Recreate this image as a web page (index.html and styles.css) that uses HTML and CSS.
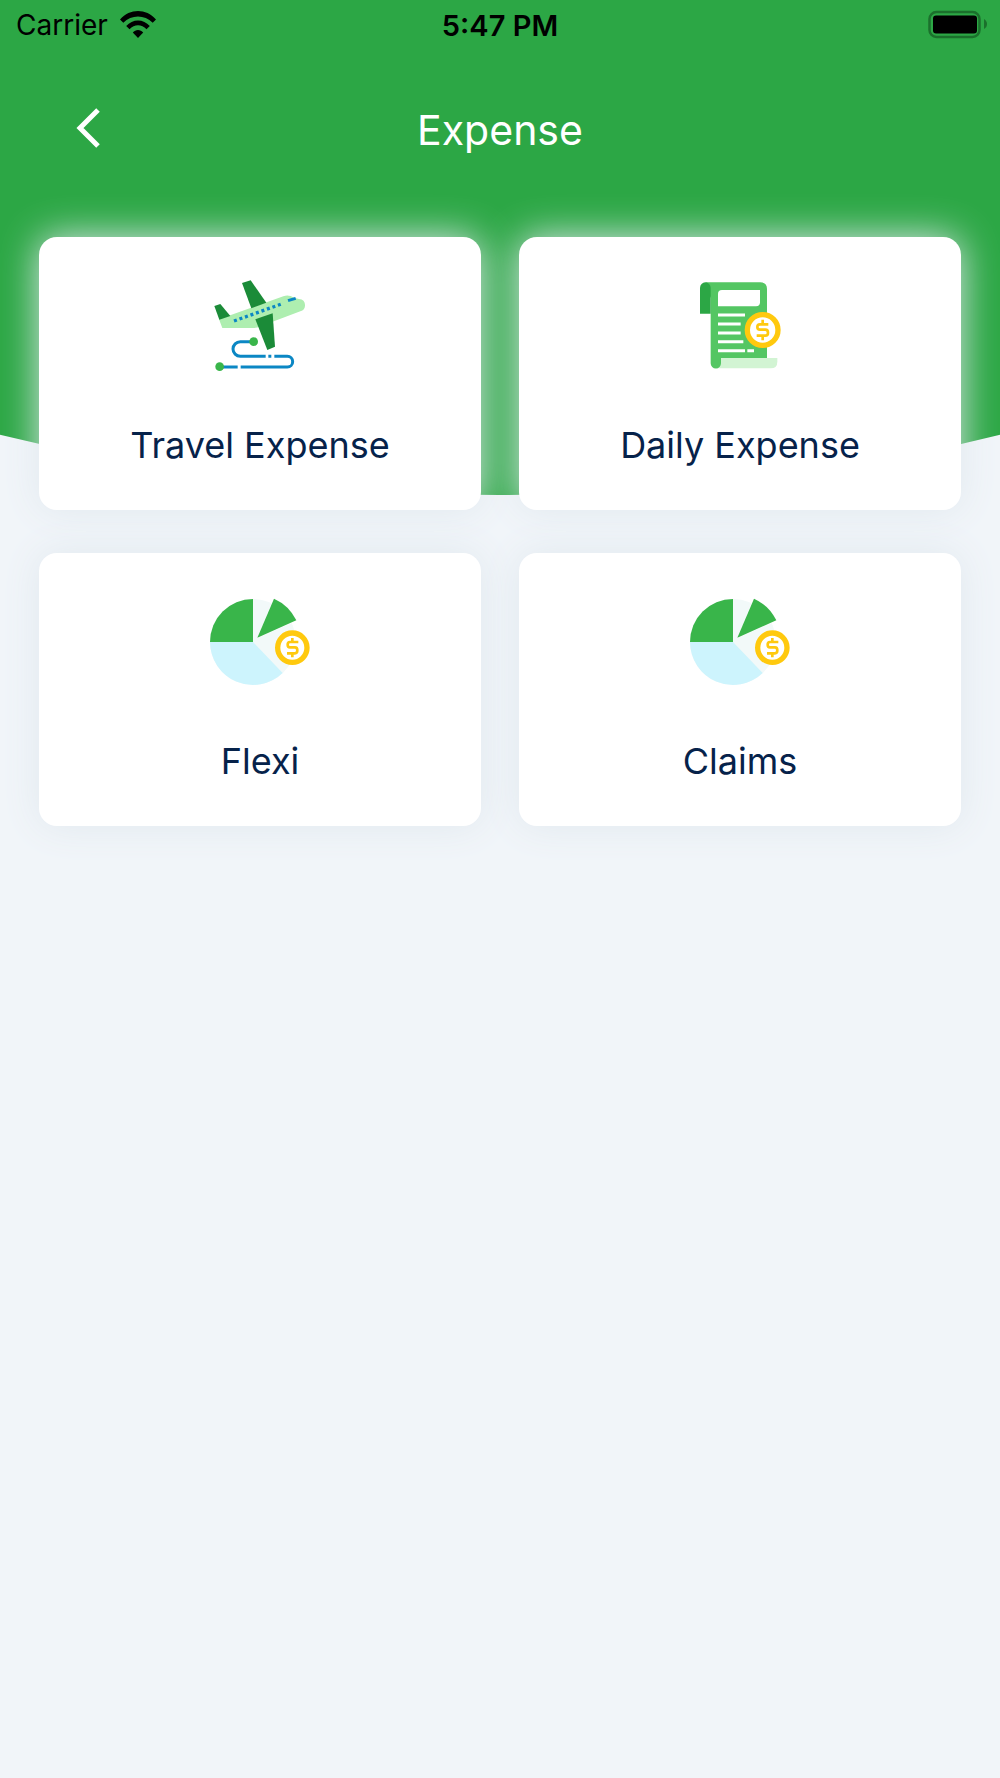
FILE: index.html
```html
<!DOCTYPE html>
<html lang="en">

<head>
    <meta charset="UTF-8">
    <meta name="viewport" content="width=device-width, initial-scale=1.0">
    <title>Expense</title>
    <link rel="stylesheet" href="styles.css">
</head>

<body>
    <div class="hero"></div>

    <div class="status-bar">
        <div class="carrier">
            <span>Carrier</span>
            <svg class="wifi" viewBox="0 0 36 28" aria-hidden="true">
                <path d="M0 8.500C10-2.800 26-2.800 36 8.500L32.700 11.800C24.500 3.400 11.500 3.400 3.300 11.800Z" />
                <path d="M6.200 15C12.500 7.500 23.500 7.500 29.800 15L26.500 18.300C21.600 13 14.400 13 9.500 18.300Z" />
                <path d="M12.800 21.600C15.500 18.200 20.500 18.200 23.200 21.600L18 27Z" />
            </svg>
        </div>
        <span class="time">5:47 PM</span>
        <svg class="battery" viewBox="0 0 60 30" aria-hidden="true">
            <rect x="1.500" y="2" width="50" height="25" rx="7" fill="none" stroke="#1b702c" stroke-width="2.500" />
            <rect x="5" y="5.500" width="44" height="18" rx="3" />
            <path d="M56 9C60 11 60 17 56 19Z" fill="#1b702c" />
        </svg>
    </div>

    <header class="header">
        <button class="back" aria-label="Back">
            <svg viewBox="0 0 24 40" aria-hidden="true">
                <path d="M22 0L4 18L22 36" fill="none" stroke="#fff" stroke-width="5" />
            </svg>
        </button>
        <h1>Expense</h1>
    </header>

    <main class="cards">
        <button class="card">
            <svg class="icon" viewBox="0 0 360 360" aria-hidden="true">
                <path d="M57 163L250 94Q266 88 282 98L297 102Q316 104 315 122Q315 134 301 139L184 183Q170 189 160 189H67Z" fill="#aeeeb0" />
                <path d="M43 123L61 117L91 153L58 164Z" fill="#1b8b38" />
                <path d="M126 54L152 46L199 113L154 130Z" fill="#1b8b38" />
                <path d="M166 163L218 145L225 245L202 255Z" fill="#1b8b38" />
                <path d="M102 168L247 116" fill="none" stroke="#0b87c4" stroke-width="10" stroke-dasharray="9 8.500" />
                <path d="M264 107L287 100" fill="none" stroke="#0b87c4" stroke-width="9" />
                <path d="M161 230H121A22 22 0 0 0 121 274H197M205 274H214M223 274H262A16 16 0 0 1 262 306H122M113 306H60" fill="none" stroke="#0b87c4" stroke-width="9" />
                <circle cx="161" cy="230" r="13" fill="#39b54a" />
                <circle cx="59" cy="305" r="13" fill="#39b54a" />
            </svg>
            <span>Travel Expense</span>
        </button>

        <button class="card">
            <svg class="icon" viewBox="-30 0 360 360" aria-hidden="true">
                <path d="M92 279H262V290Q262 310 242 310H78Z" fill="#d2f4d3" />
                <path d="M47 52H211Q231 52 231 72V279H93V295A15 15 0 0 1 62 295V100Z" fill="#54c663" />
                <path d="M30 146V69A16 17 0 0 1 62 69V146Z" fill="#2ca745" />
                <path d="M96 75H210V112Q210 124 198 124H84V87Q84 75 96 75Z" fill="#fff" />
                <path d="M84 150H165M84 177H152M84 204H152M84 230H160M84 257H165M172 257H192" fill="none" stroke="#fff" stroke-width="9" />
                <circle cx="218" cy="195" r="46" fill="#fff" stroke="#ffc90e" stroke-width="16" />
                <path d="M235 178H210Q202 178 202 186T210 194H226Q234 194 234 203T226 212H200M218 164V178M218 212V226" fill="none" stroke="#ffc90e" stroke-width="8" />
            </svg>
            <span>Daily Expense</span>
        </button>

        <button class="card">
            <svg class="icon" viewBox="0 -12 360 360" aria-hidden="true">
                <circle cx="159" cy="171" r="129" fill="#f2f9f9" />
                <path d="M159 171V42A129 129 0 0 0 30 171Z" fill="#39b54a" />
                <path d="M159 171H30A129 129 0 0 0 248 264Z" fill="#cdf4fd" />
                <path d="M171 160L223 35L304 101Z" fill="#fff" />
                <path d="M172 158L222 41Q267 61 289 106Z" fill="#39b54a" />
                <circle cx="277" cy="188" r="44" fill="#fff" stroke="#ffc90e" stroke-width="16" />
                <path d="M295 171H270Q263 171 263 179T270 187H285Q292 187 292 196T285 205H261M277 159V171M277 205V217" fill="none" stroke="#ffc90e" stroke-width="8" />
            </svg>
            <span>Flexi</span>
        </button>

        <button class="card">
            <svg class="icon" viewBox="0 -12 360 360" aria-hidden="true">
                <circle cx="159" cy="171" r="129" fill="#f2f9f9" />
                <path d="M159 171V42A129 129 0 0 0 30 171Z" fill="#39b54a" />
                <path d="M159 171H30A129 129 0 0 0 248 264Z" fill="#cdf4fd" />
                <path d="M171 160L223 35L304 101Z" fill="#fff" />
                <path d="M172 158L222 41Q267 61 289 106Z" fill="#39b54a" />
                <circle cx="277" cy="188" r="44" fill="#fff" stroke="#ffc90e" stroke-width="16" />
                <path d="M295 171H270Q263 171 263 179T270 187H285Q292 187 292 196T285 205H261M277 159V171M277 205V217" fill="none" stroke="#ffc90e" stroke-width="8" />
            </svg>
            <span>Claims</span>
        </button>
    </main>
</body>

</html>
```

FILE: styles.css
```css
* {
    box-sizing: border-box;
}

body {
    margin: 0;
    min-height: 100vh;
    background-color: #f1f5f9;
    font-family: Inter, "Liberation Sans", sans-serif;
}

button {
    border: none;
    background: none;
    padding: 0;
    font: inherit;
    cursor: pointer;
}

svg {
    display: block;
    overflow: visible;
}

/* green backdrop with the curved bottom, sits behind everything */
.hero {
    position: absolute;
    top: 0;
    left: 0;
    z-index: -1;
    width: 100%;
    height: 495px;
    background-color: #2ca745;
    clip-path: ellipse(211% 427% at 50% -327%);
}

.status-bar {
    display: grid;
    grid-template-columns: 1fr auto 1fr;
    align-items: center;
    height: 50px;
    padding: 0 16px;
    font-size: 28px;
    color: #000;
}

.carrier {
    display: flex;
    align-items: center;
    gap: 12px;
}

.wifi {
    width: 36px;
    height: 28px;
}

.time {
    font-size: 29px;
    font-weight: 600;
}

.battery {
    width: 60px;
    height: 30px;
    margin-right: -4px;
    justify-self: end;
}

.header {
    display: grid;
    grid-template-columns: 1fr auto 1fr;
    align-items: center;
    height: 160px;
    padding: 0 76px;
    color: #fff;
}

.back {
    justify-self: start;
}

.back svg {
    width: 24px;
    height: 40px;
}

h1 {
    margin: 0;
    font-size: 41px;
    font-weight: 400;
}

.cards {
    display: grid;
    grid-template-columns: 1fr 1fr;
    gap: 43px 38px;
    padding: 27px 39px;
}

.card {
    display: flex;
    flex-direction: column;
    align-items: center;
    gap: 38px;
    padding: 28px 20px 43px;
    border-radius: 18px;
    background-color: #fff;
    box-shadow: 0 0 38px #e0e8ee;
    font-size: 36px;
    line-height: 44px;
    color: #06224a;
}

.icon {
    width: 120px;
    height: 120px;
}
```
